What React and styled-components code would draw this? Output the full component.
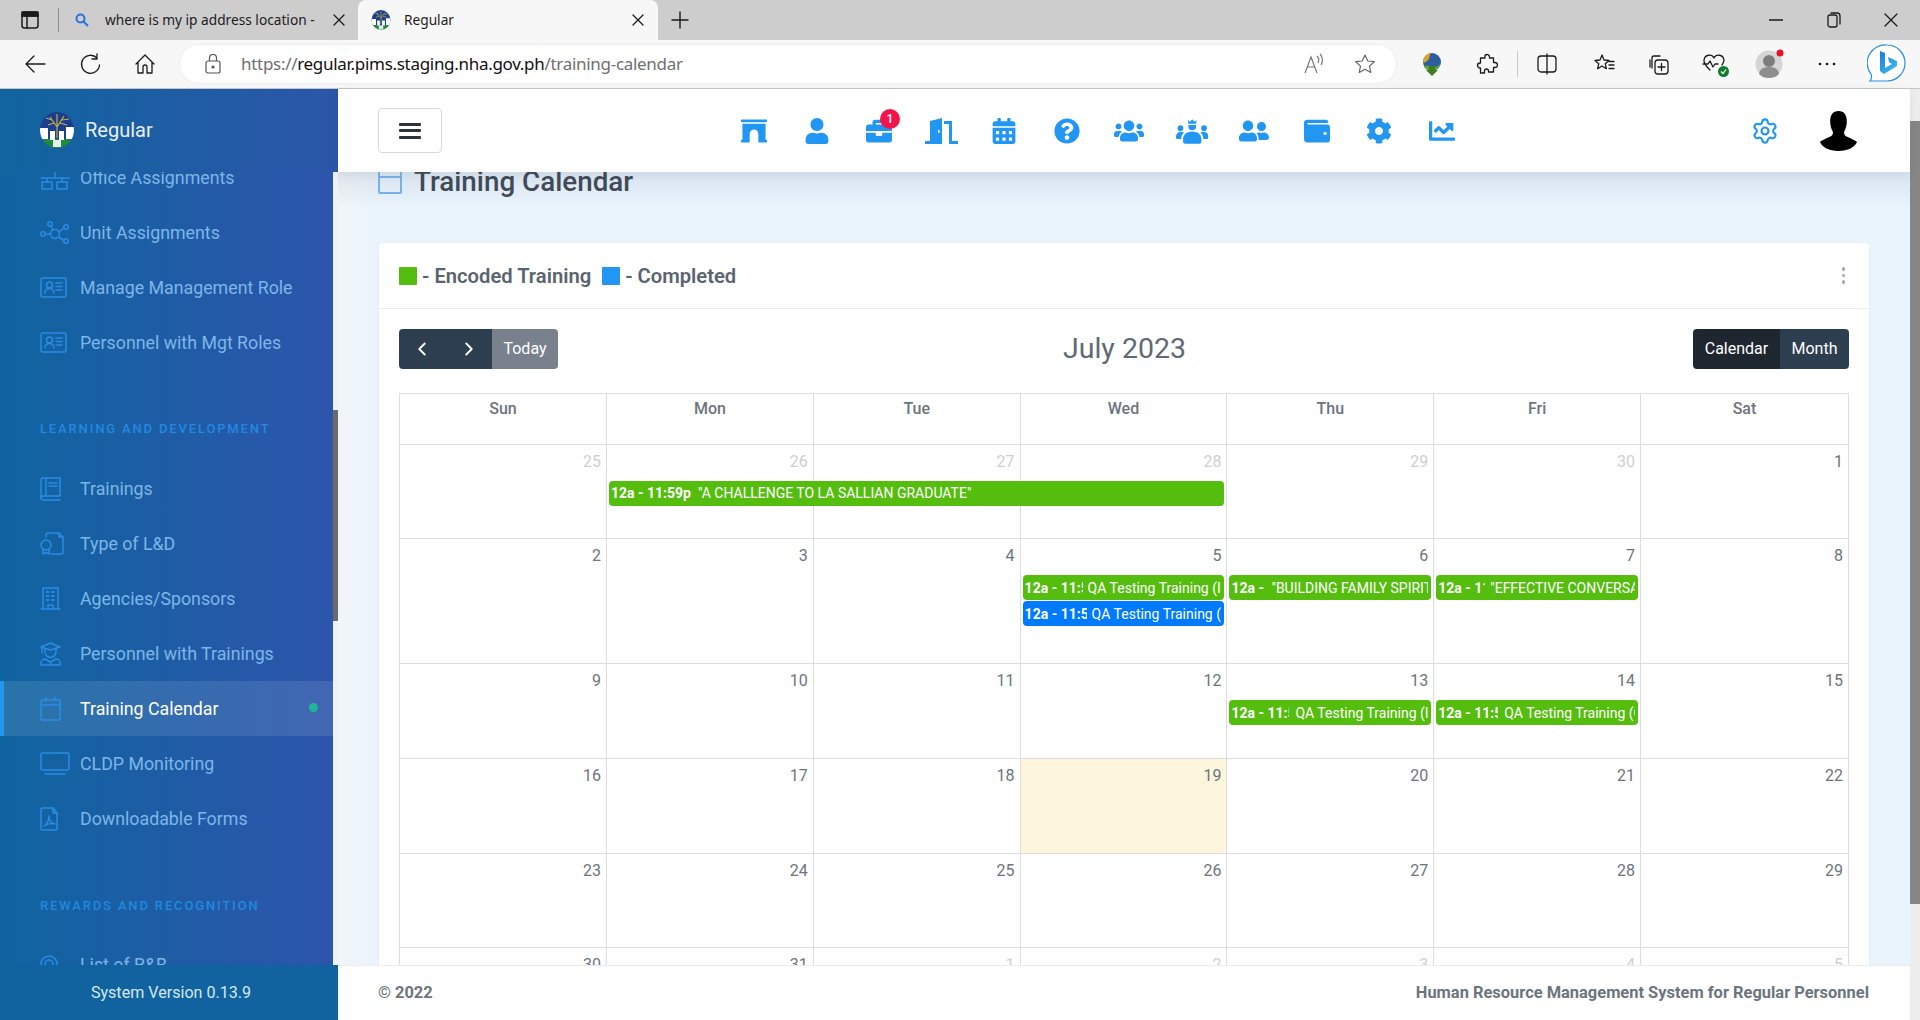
import React from "react";
import styled, { createGlobalStyle } from "styled-components";
import {
  FaArchway, FaUser, FaBriefcase, FaCalendarAlt, FaQuestionCircle,
  FaUsers, FaUserFriends, FaWallet, FaCog, FaChartLine,
} from "react-icons/fa";
import { Settings, ChevronLeft, ChevronRight } from "lucide-react";

const Global = createGlobalStyle`
  html, body { margin: 0; padding: 0; height: 1020px; overflow: hidden; background: #fff; }
  body { font-family: Roboto, "Liberation Sans", sans-serif; }
  * { box-sizing: border-box; }
`;

const Shell = styled.div`display:flex;flex-direction:column;width:1920px;height:1020px;overflow:hidden;`;

/* ---------- browser chrome ---------- */
const TabStrip = styled.div`display:flex;align-items:center;height:40px;background:#cdcdcd;`;
const TabsButton = styled.div`width:59px;height:24px;display:flex;align-items:center;justify-content:center;padding-left:1px;border-right:1px solid #8f8f8f;`;
const Tab = styled.div`
  display:flex;align-items:center;height:40px;font:13.7px "Noto Sans","Open Sans",sans-serif;color:#1c1c1c;padding-bottom:1px;
  width:${p => p.$w}px;padding-left:${p => p.$pl}px;
  background:${p => (p.$active ? "#f7f7f7" : "transparent")};
  border-radius:${p => (p.$active ? "8px 8px 0 0" : "0")};
`;
const TabTitle = styled.span`flex:1;white-space:nowrap;overflow:hidden;margin-left:${p => p.$ml}px;`;
const TabClose = styled.div`width:12px;height:12px;margin-right:${p => p.$mr}px;display:flex;`;
const NewTab = styled.div`margin-left:13px;display:flex;`;
const WindowControls = styled.div`margin-left:auto;display:flex;gap:43.5px;padding-right:22px;align-items:center;`;
const ToolBar = styled.div`display:flex;align-items:center;height:49px;background:#f7f7f7;border-bottom:1px solid #c6c6c6;padding-bottom:1px;`;
const ToolGroup = styled.div`display:flex;width:180px;flex-shrink:0;padding-left:24px;gap:33px;`;
const AddressBar = styled.div`
  width:1216px;flex-shrink:0;height:38px;border-radius:19px;background:#fff;display:flex;align-items:center;padding-left:25px;
  box-shadow:0 0 3px rgba(0,0,0,.08);
`;
const Url = styled.div`margin-left:20px;font:17px "Noto Sans","Open Sans",sans-serif;letter-spacing:-.3px;color:#6f6f6f;flex:1;white-space:nowrap;`;
const UrlHost = styled.span`color:#111;`;
const AddrIcons = styled.div`display:flex;gap:29px;padding-right:20px;align-items:center;`;
const ExtIcons = styled.div`display:flex;align-items:center;margin-left:23px;`;
const Ext = styled.div`width:${p => p.$w || 55}px;margin-left:${p => p.$ml || 0}px;display:flex;justify-content:center;align-items:center;position:relative;`;
const Sep = styled.div`width:1px;height:26px;background:#c9c9c9;`;
const HealthOk = styled.svg`position:absolute;left:32px;top:14px;`;

const line = { fill: "none", stroke: "#1b1b1b", strokeWidth: 1.3, strokeLinecap: "round", strokeLinejoin: "round" };
const Ico = ({ w = 22, h = 22, children, vb }) => (
  <svg width={w} height={h} viewBox={vb || `0 0 ${w} ${h}`} {...line}>{children}</svg>
);

const Logo = ({ size }) => (
  <svg width={size} height={size} viewBox="0 0 36 36">
    <defs><clipPath id={`lc${size}`}><ellipse cx="18" cy="18" rx="17" ry="18" /></clipPath></defs>
    <g clipPath={`url(#lc${size})`}>
      <rect width="36" height="27" fill="#1b3f8e" />
      <rect y="27" width="36" height="9" fill="#1f8a3c" />
      <path d="M18 26V12M18 15 11 5M18 15 25 4M18 12 18 2M13 8 7 6M23 8 30 7M15 11 9 13M21 11 28 13" stroke="#c9ad3f" strokeWidth="1.2" fill="none" />
      <path d="M1 16h8v11H1zM11 19h5v9h-5zM20 19h5v9h-5zM27 15h8v12h-8z" fill="#fff" />
      <path d="M14 28h8v7h-8z" fill="#e7f0e8" />
    </g>
  </svg>
);

/* ---------- sidebar ---------- */
const Page = styled.div`display:flex;flex:1;min-height:0;`;
const Sidebar = styled.aside`width:338px;display:flex;flex-direction:column;flex-shrink:0;`;
const Brand = styled.div`
  height:83px;display:flex;align-items:center;padding:0 0 1px 39px;gap:10px;color:#e6eff9;font-size:20px;
  background:linear-gradient(90deg,#10649f,#2c56a9);
`;
const NavWrap = styled.div`flex:1;display:flex;min-height:0;`;
const Nav = styled.nav`
  width:333px;overflow:hidden;background:linear-gradient(90deg,#0f64a0,#2d55ab);
`;
const NavList = styled.div`margin-top:-22px;`;
const NavScroll = styled.div`width:5px;background:#eef2f6;padding-top:238px;`;
const NavThumb = styled.div`height:211px;background:#6b6b6b;`;
const Item = styled.div`
  height:55px;display:flex;align-items:center;padding-left:${p => (p.$active ? 36 : 40)}px;font-size:17.8px;position:relative;
  color:${p => (p.$active ? "#fff" : "#7db6e8")};
  border-left:${p => (p.$active ? "4px solid #2196f3" : "none")};
  background:${p => (p.$active ? "rgba(255,255,255,.1)" : "transparent")};
`;
const ItemIcon = styled.div`width:40px;display:flex;`;
const Dot = styled.span`position:absolute;right:15px;top:22px;width:9px;height:9px;border-radius:50%;background:#20b69a;`;
const Section = styled.div`
  height:91px;padding:${p => p.$pt}px 0 0 40px;font-size:13px;font-weight:500;letter-spacing:1.85px;color:#2189e0;line-height:16px;
`;
const Version = styled.div`height:55px;background:#10639f;color:#d5e7f7;font-size:16.1px;display:flex;align-items:center;justify-content:center;padding-left:4px;`;

const sl = { fill: "none", stroke: "#2a8ce4", strokeWidth: 1.5, strokeLinejoin: "round", strokeLinecap: "round" };
const SIcon = ({ children }) => <svg width="30" height="24" viewBox="0 0 30 24" {...sl}>{children}</svg>;
const icons = {
  network: <SIcon><path d="M15 5v7M1 12h28M7 12v4M22 12v4" /><rect x="2" y="16" width="10" height="7" /><rect x="17" y="16" width="10" height="7" /></SIcon>,
  nodes: <SIcon><circle cx="15" cy="13" r="4.5" /><circle cx="10" cy="3" r="2.2" /><circle cx="26" cy="6" r="2.2" /><circle cx="26" cy="20" r="2.2" /><circle cx="3" cy="13" r="2.2" /><path d="M11 5l2 4M19 11l5-4M18.5 16l5.5 3.5M5.5 13h5" /></SIcon>,
  idcard: <SIcon><rect x="1" y="2" width="25" height="19" rx="2" /><circle cx="9.5" cy="9" r="3" /><path d="M5 17c0-6 9-6 9 0M16 7h6M16 10.5h6M16 14h6" /></SIcon>,
  book: <SIcon><path d="M1 20V3a2 2 0 0 1 2-2h17v18H3a2.5 2.5 0 0 0-2 2.500a2 2 0 0 0 2 1.500h17M6 1v18M9 6h8M9 9h8" /></SIcon>,
  cert: <SIcon><path d="M6 5V3a2 2 0 0 1 2-2h11l4 4v16a1 1 0 0 1-1 1H11M19 1v4h4" /><circle cx="6" cy="13" r="5" /><path d="M3 17v5l3-1.500 3 1.500v-5" /></SIcon>,
  building: <SIcon><path d="M1 22h19M3 22V1h15v21M8 22v-4h5v4" /><path d="M7 5h1.500M12 5h1.500M7 9h1.500M12 9h1.500M7 13h1.500M12 13h1.500" strokeWidth="2" /></SIcon>,
  grad: <SIcon><path d="M1 5l9.500-4L20 5l-9.500 3zM5 7v3a5.500 5.500 0 0 0 11 0V7M2 5v6" /><path d="M1 23v-2a4 4 0 0 1 4-4l5.500 3 5.500-3a4 4 0 0 1 4 4v2zM10.500 20v3" /></SIcon>,
  cal: <SIcon><rect x="1" y="3" width="19" height="20" rx="1.500" /><path d="M1 8h19M6 0v3M15 0v3" /></SIcon>,
  monitor: <SIcon><rect x="1" y="1" width="28" height="17" rx="1.500" /><path d="M5 22h20" /></SIcon>,
  pdf: <SIcon><path d="M1 3a2 2 0 0 1 2-2h10l4 5v16a1 1 0 0 1-1 1H2a1 1 0 0 1-1-1zM13 1v5h4" /><path d="M4 19c3-1 5-6 5-10 0 4 2 7 6 8-4-1-8 0-11 2z" /></SIcon>,
  target: <SIcon><circle cx="9" cy="11" r="8" /><circle cx="9" cy="11" r="4" /></SIcon>,
};

const NavData = [
  { t: "Office Assignments", i: "network" },
  { t: "Unit Assignments", i: "nodes" },
  { t: "Manage Management Role", i: "idcard" },
  { t: "Personnel with Mgt Roles", i: "idcard" },
  { s: "LEARNING AND DEVELOPMENT", pt: 51 },
  { t: "Trainings", i: "book" },
  { t: "Type of L&D", i: "cert" },
  { t: "Agencies/Sponsors", i: "building" },
  { t: "Personnel with Trainings", i: "grad" },
  { t: "Training Calendar", i: "cal", active: true },
  { t: "CLDP Monitoring", i: "monitor" },
  { t: "Downloadable Forms", i: "pdf" },
  { s: "REWARDS AND RECOGNITION", pt: 52 },
  { t: "List of R&B", i: "target" },
];

/* ---------- main ---------- */
const Main = styled.main`flex:1;min-width:0;display:flex;flex-direction:column;`;
const TopBar = styled.header`
  height:83px;background:#fff;display:flex;align-items:center;padding:0 53px 0 40px;position:relative;z-index:2;
  box-shadow:0 2px 10px rgba(40,60,90,.08);
`;
const Burger = styled.button`
  width:64px;height:45px;background:#fff;border:1px solid #d5d8dc;border-radius:4px;display:flex;flex-direction:column;
  align-items:center;justify-content:center;gap:3.500px;padding:0;
`;
const BurgerBar = styled.span`display:block;width:22px;height:3px;background:#2d353c;border-radius:1px;`;
const TopNav = styled.div`display:flex;margin-left:281px;align-items:center;`;
const NavCell = styled.div`
  width:62.5px;display:flex;justify-content:center;align-items:center;position:relative;color:#2196f3;
  svg { height:${p => p.$h || 26}px;width:auto;display:block; }
`;
const Badge = styled.span`
  position:absolute;left:32px;top:-9px;width:20px;height:20px;border-radius:50%;background:#f5134c;color:#fff;
  font-size:12px;font-weight:500;display:flex;align-items:center;justify-content:center;
`;
const TopRight = styled.div`margin-left:auto;display:flex;align-items:center;gap:41px;color:#2196f3;`;

const Content = styled.div`
  flex:1;min-height:0;overflow:hidden;padding:0 41px;
  background:linear-gradient(180deg,rgba(90,110,140,.12),rgba(90,110,140,0) 36px),linear-gradient(90deg,#f2f5f8 0,#eaf4fd 40px);
`;
const TitleRow = styled.div`height:71px;display:flex;`;
const TitleIcon = styled.div`
  width:24px;height:24px;margin:-2px 12px 0 -1px;border:2px solid #76b2e6;border-radius:2px;position:relative;
  &::before{content:"";position:absolute;left:0;right:0;top:4px;height:2px;background:#76b2e6;}
`;
const Title = styled.h1`margin:-3px 0 0;font-size:27.8px;font-weight:500;line-height:26px;color:#414b57;`;
const Card = styled.section`background:#fff;border-radius:4px;box-shadow:0 1px 3px rgba(60,80,110,.07);`;
const CardHead = styled.div`height:66px;border-bottom:1px solid #ececec;display:flex;align-items:center;padding:0 20px;color:#5a6470;font-size:20.2px;font-weight:600;`;
const Swatch = styled.span`width:18px;height:18px;background:${p => p.$c};margin-right:5px;margin-left:${p => p.$ml || 0}px;border-radius:1px;`;
const Kebab = styled.div`
  margin-left:auto;margin-right:4px;display:flex;flex-direction:column;gap:3px;
`;
const KebabDot = styled.span`width:3.500px;height:3.500px;border-radius:50%;background:#a2a9b2;`;
const CardBody = styled.div`padding:20px 20px 0;`;
const CalBar = styled.div`display:flex;align-items:flex-start;justify-content:space-between;height:64px;position:relative;`;
const BtnGroup = styled.div`display:flex;height:40px;border-radius:4px;overflow:hidden;`;
const Btn = styled.div`
  width:${p => p.$w}px;display:flex;align-items:center;justify-content:center;color:#fff;font-size:16px;padding-bottom:1px;
  background:${p => p.$bg};
`;
const Month = styled.h2`margin:0;font-size:28.5px;font-weight:400;color:#5f6a75;line-height:40px;position:relative;left:-1px;`;
const Table = styled.div`border:1px solid #ddd;border-bottom:none;width:1450px;`;
const COLS = "206px repeat(5,206.8px) 1fr";
const HeadRow = styled.div`display:grid;grid-template-columns:${COLS};height:50px;`;
const HeadCell = styled.div`
  text-align:center;font-size:16px;font-weight:500;color:#6c757d;padding-top:5px;line-height:19px;
  border-left:${p => (p.$first ? "none" : "1px solid #ddd")};
`;
const Week = styled.div`
  display:grid;grid-template-columns:${COLS};grid-template-rows:37px 26px 26px 1fr;height:${p => p.$h}px;
`;
const Cell = styled.div`
  grid-column:${p => p.$col};grid-row:1 / -1;border-top:1px solid #ddd;padding:7px 5px 0 0;text-align:right;font-size:16px;line-height:20px;
  border-left:${p => (p.$col === 1 ? "none" : "1px solid #ddd")};
  color:${p => (p.$muted ? "#cfcfcf" : "#6c757d")};
  background:${p => (p.$today ? "#fdf6dd" : "transparent")};
`;
const Event = styled.div`
  grid-column:${p => p.$col} / span ${p => p.$span || 1};grid-row:${p => p.$row};z-index:1;
  margin:0 2px 0 3px;height:25px;border-radius:4px;background:${p => p.$c};color:#fff;font-size:14px;line-height:${p => p.$lh || 26}px;
  padding:0 3px 0 2px;display:flex;overflow:hidden;white-space:nowrap;min-width:0;
`;
const EvTime = styled.b`font-weight:700;flex:none;overflow:hidden;width:${p => p.$w}px;margin-right:${p => p.$gap}px;`;
const EvTitle = styled.span`overflow:hidden;min-width:0;flex:1;`;
const Footer = styled.footer`
  height:55px;background:#fff;border-top:1px solid #ececec;display:flex;align-items:center;justify-content:space-between;
  padding:0 41px 2px 40px;color:#6c757d;font-size:16.45px;font-weight:700;
`;
const MainScroll = styled.div`width:10px;background:#ededed;padding-top:32px;flex-shrink:0;`;
const MainThumb = styled.div`height:783px;background:#868686;`;

const GREEN = "#55bd0e";
const weeks = [
  { h: 94, days: [25, 26, 27, 28, 29, 30, 1], muted: [0, 1, 2, 3, 4, 5],
    ev: [{ col: 2, span: 3, row: 2, c: GREEN, lh: 24, time: "12a - 11:59p", w: 81, gap: 6, title: "\"A CHALLENGE TO LA SALLIAN GRADUATE\"" }] },
  { h: 125, days: [2, 3, 4, 5, 6, 7, 8],
    ev: [
      { col: 4, row: 2, c: GREEN, time: "12a - 11:59p", w: 58, gap: 5, title: "QA Testing Training (Internal)" },
      { col: 4, row: 3, c: "#007bff", time: "12a - 11:59p", w: 62, gap: 5, title: "QA Testing Training (Completed)" },
      { col: 5, row: 2, c: GREEN, time: "12a - 11:59p", w: 34, gap: 6, title: "\"BUILDING FAMILY SPIRIT\"" },
      { col: 6, row: 2, c: GREEN, time: "12a - 11:59p", w: 47, gap: 5, title: "\"EFFECTIVE CONVERSATIONS\"" },
    ] },
  { h: 95, days: [9, 10, 11, 12, 13, 14, 15],
    ev: [
      { col: 5, row: 2, c: GREEN, time: "12a - 11:59p", w: 58, gap: 6, title: "QA Testing Training (Internal)" },
      { col: 6, row: 2, c: GREEN, time: "12a - 11:59p", w: 60, gap: 6, title: "QA Testing Training (Completed)" },
    ] },
  { h: 95, days: [16, 17, 18, 19, 20, 21, 22], today: 3 },
  { h: 94, days: [23, 24, 25, 26, 27, 28, 29] },
  { h: 94, days: [30, 31, 1, 2, 3, 4, 5], muted: [2, 3, 4, 5, 6] },
];

const CrownUsers = () => (
  <svg viewBox="0 0 640 512" fill="currentColor">
    <path d="M232 40l44 34 44-50 44 50 44-34-12 74H244z" />
    <path d="M246 138h148v30a74 74 0 0 1-148 0z" />
    <circle cx="88" cy="200" r="56" /><circle cx="552" cy="200" r="56" />
    <path d="M0 370c0-60 40-100 110-100 20 0 36 5 48 14-34 28-56 76-56 130H32c-18 0-32-14-32-32zM640 370c0-60-40-100-110-100-20 0-36 5-48 14 34 28 56 76 56 130h70c18 0 32-14 32-32z" />
    <path d="M140 420c0-80 60-152 180-152s180 72 180 152v50c0 22-18 38-40 38H180c-22 0-40-16-40-38z" />
  </svg>
);

const Door = () => (
  <svg viewBox="0 0 33 26" fill="currentColor">
    <path fillRule="evenodd" d="M5 3 17 0v26H0v-3h5zM13 12h1.500v3H13z" />
    <path d="M19 3h8v20h6v3h-9V6h-5z" />
  </svg>
);

const Avatar = () => (
  <svg width="37" height="40" viewBox="0 0 40 40" preserveAspectRatio="none" fill="#000">
    <path d="M20 0c6 0 9 4 9 10 0 4-1 8-3 11 0 3 1 4 4 5 5 2 9 4 10 5-2 5-10 9-20 9S2 36 0 31c1-1 5-3 10-5 3-1 4-2 4-5-2-3-3-7-3-11 0-6 3-10 9-10z" />
  </svg>
);

export default function App() {
  return (
    <Shell>
      <Global />
      <TabStrip>
        <TabsButton>
          <Ico w={18} h={18}><rect x="1" y="1" width="16" height="16" rx="2.500" strokeWidth="1.500" /><path d="M1 5h16M6 5v12" strokeWidth="1.500" /><rect x="1" y="1" width="16" height="4" fill="#1b1b1b" /></Ico>
        </TabsButton>
        <Tab $w={299} $pl={16}>
          <svg width="14" height="14" viewBox="0 0 14 14" fill="none" stroke="#2b6fe0" strokeWidth="2"><circle cx="5.500" cy="5.500" r="4" /><path d="M8.500 8.500 13 13" /></svg>
          <TabTitle $ml={16}>where is my ip address location -</TabTitle>
          <TabClose $mr={13}><Ico w={12} h={12}><path d="M1 1l10 10M11 1 1 11" /></Ico></TabClose>
        </Tab>
        <Tab $active $w={300} $pl={13}>
          <Logo size={20} />
          <TabTitle $ml={13}>Regular</TabTitle>
          <TabClose $mr={14}><Ico w={12} h={12}><path d="M1 1l10 10M11 1 1 11" /></Ico></TabClose>
        </Tab>
        <NewTab><Ico w={18} h={18}><path d="M9 1v16M1 9h16" strokeWidth="1.400" /></Ico></NewTab>
        <WindowControls>
          <Ico w={14} h={14}><path d="M0 7h14" /></Ico>
          <Ico w={14} h={16}><rect x="1" y="3" width="9" height="12" rx="2" /><path d="M4 1h6a3 3 0 0 1 3 3v8" /></Ico>
          <Ico w={14} h={14}><path d="M1 1l12 12M13 1 1 13" /></Ico>
        </WindowControls>
      </TabStrip>
      <ToolBar>
        <ToolGroup>
          <Ico><path d="M21 11H2M10 3l-8 8 8 8" /></Ico>
          <Ico><path d="M18 5a9 9 0 1 0 2.500 7M18 1v5h-5" /></Ico>
          <Ico><path d="M2 11l9-9 9 9M4 9v11h5v-6a2 2 0 0 1 4 0v6h5V9" /></Ico>
        </ToolGroup>
        <AddressBar>
          <svg width="16" height="20" viewBox="0 0 16 20" fill="none" stroke="#555" strokeWidth="1.200"><rect x="1" y="7" width="14" height="12" rx="2" /><path d="M4.500 7V4a3.500 3.500 0 0 1 7 0v3" /><circle cx="8" cy="13" r="1" fill="#555" /></svg>
          <Url>https://<UrlHost>regular.pims.staging.nha.gov.ph</UrlHost>/training-calendar</Url>
          <AddrIcons>
            <svg width="22" height="22" viewBox="0 0 22 22" fill="none" stroke="#777" strokeWidth="1.200"><path d="M2 20 8 4l6 16M4.500 14h7M14 3c2 2 2 5 1 7M17 1c3 3 3 8 1 11" /></svg>
            <svg width="22" height="22" viewBox="0 0 22 22" fill="none" stroke="#666" strokeWidth="1.200" strokeLinejoin="round"><path d="M11 2l2.800 6 6.500.7-4.800 4.400 1.300 6.400L11 16.300 5.200 19.500l1.300-6.400L1.700 8.700 8.200 8z" /></svg>
          </AddrIcons>
        </AddressBar>
        <ExtIcons>
          <Ext $w={26}>
            <svg width="22" height="24" viewBox="0 0 22 24"><circle cx="11" cy="10" r="9" fill="#2d5f9e" /><path d="M2 10a9 9 0 0 1 8-9c-2 3-1 5-3 7s-3 3-5 2z" fill="#d8a52a" /><path d="M3 15c3-3 6-1 8 0s5 0 8-3c-1 4-4 7-8 7s-6-2-8-4z" fill="#57a832" /><path d="M8 14h6v4h3l-6 6-6-6h3z" fill="#3f7d1f" /></svg>
          </Ext>
          <Ext $w={60} $ml={12}>
            <Ico><path d="M9 2.500a2.500 2.500 0 0 1 4.500 1.500V5h4v4.500H19a2.500 2.500 0 0 1 0 5h-1.500V19h-5v-1a2 2 0 0 0-4 0v2H4.500v-5H4a2.500 2.500 0 0 1 0-5h.5V5H9z" /></Ico>
          </Ext>
          <Sep />
          <Ext $w={58}><Ico><rect x="2" y="3" width="18" height="16" rx="3" /><path d="M11 1v20" /></Ico></Ext>
          <Ext><Ico><path d="M9 2l2 5 5 .5-3.800 3.200 1.200 5L9 13l-4.400 2.700 1.200-5L2 7.500 7 7zM16 12h5M16 15.500h5M16 8.500h5" /></Ico></Ext>
          <Ext><Ico><path d="M4 15V5a2 2 0 0 1 2-2h6M2 14V7" /><rect x="7" y="7" width="13" height="14" rx="3" /><path d="M13.500 10.500v7M10 14h7" /></Ico></Ext>
          <Ext>
            <Ico w={24} h={24}><path d="M12 6c-2-4-9-4-10 2-.5 4 3 7 6 10M12 6c2-4 9-4 10 2 0 2-1 3-2 5M1 12h5l2-3 3 6 2-3h3" /></Ico>
            <HealthOk width="11" height="11" viewBox="0 0 11 11"><circle cx="5.500" cy="5.500" r="5.500" fill="#0f7b2e" /><path d="M3 5.500l2 2 3-4" stroke="#fff" fill="none" strokeWidth="1.200" /></HealthOk>
          </Ext>
          <Ext $w={58}>
            <svg width="30" height="30" viewBox="0 0 30 30"><circle cx="14" cy="15" r="13.500" fill="#d5d5d5" /><circle cx="14" cy="12" r="6" fill="#7d7d7d" /><path d="M4 25c1-6 5-7 10-7s9 1 10 7c-3 3-6 4-10 4s-7-1-10-4z" fill="#8e8e8e" /><circle cx="25" cy="4" r="3.500" fill="#e81123" /></svg>
          </Ext>
          <Ext $w={56}><Ico w={20} h={6} ><path d="M3 3h.1M10 3h.1M17 3h.1" strokeWidth="2.600" /></Ico></Ext>
          <Ext $w={64}>
            <svg width="40" height="40" viewBox="0 0 40 40">
              <defs><linearGradient id="bg1" x1="0" y1="0" x2="1" y2="1"><stop offset="0" stopColor="#1c7ae8" /><stop offset="1" stopColor="#3fc4e6" /></linearGradient></defs>
              <path d="M20 1a18 18 0 0 1 0 36H3c2-2 2-4 1-7A18 18 0 0 1 20 1z" fill="#fff" stroke="#2a8de6" strokeWidth="1.200" />
              <path d="M13 7l5 2v15l7-4-3-2-1-5 9 4v5l-13 8-4-3z" fill="url(#bg1)" />
            </svg>
          </Ext>
        </ExtIcons>
      </ToolBar>

      <Page>
        <Sidebar>
          <Brand><Logo size={36} />Regular</Brand>
          <NavWrap>
            <Nav>
              <NavList>
                {NavData.map(n => n.s ? (
                  <Section key={n.s} $pt={n.pt}>{n.s}</Section>
                ) : (
                  <Item key={n.t} $active={n.active}>
                    <ItemIcon>{icons[n.i]}</ItemIcon>
                    {n.t}
                    {n.active && <Dot />}
                  </Item>
                ))}
              </NavList>
            </Nav>
            <NavScroll><NavThumb /></NavScroll>
          </NavWrap>
          <Version>System Version 0.13.9</Version>
        </Sidebar>

        <Main>
          <TopBar>
            <Burger><BurgerBar /><BurgerBar /><BurgerBar /></Burger>
            <TopNav>
              <NavCell><FaArchway /></NavCell>
              <NavCell><FaUser /></NavCell>
              <NavCell><FaBriefcase /><Badge>1</Badge></NavCell>
              <NavCell><Door /></NavCell>
              <NavCell><FaCalendarAlt /></NavCell>
              <NavCell><FaQuestionCircle /></NavCell>
              <NavCell $h={30}><FaUsers /></NavCell>
              <NavCell><CrownUsers /></NavCell>
              <NavCell $h={30}><FaUserFriends /></NavCell>
              <NavCell><FaWallet /></NavCell>
              <NavCell><FaCog /></NavCell>
              <NavCell><FaChartLine /></NavCell>
            </TopNav>
            <TopRight>
              <Settings size={28} strokeWidth={1.800} />
              <Avatar />
            </TopRight>
          </TopBar>

          <Content>
            <TitleRow><TitleIcon /><Title>Training Calendar</Title></TitleRow>
            <Card>
              <CardHead>
                <Swatch $c="#55bd0e" />- Encoded Training
                <Swatch $c="#2196f3" $ml={11} />- Completed
                <Kebab><KebabDot /><KebabDot /><KebabDot /></Kebab>
              </CardHead>
              <CardBody>
                <CalBar>
                  <BtnGroup>
                    <Btn $w={46} $bg="#2c3e50"><ChevronLeft size={22} /></Btn>
                    <Btn $w={47} $bg="#2c3e50"><ChevronRight size={22} /></Btn>
                    <Btn $w={66} $bg="#78818c">Today</Btn>
                  </BtnGroup>
                  <Month>July 2023</Month>
                  <BtnGroup>
                    <Btn $w={87} $bg="#1e2730">Calendar</Btn>
                    <Btn $w={69} $bg="#2c3e50">Month</Btn>
                  </BtnGroup>
                </CalBar>
                <Table>
                  <HeadRow>
                    {["Sun", "Mon", "Tue", "Wed", "Thu", "Fri", "Sat"].map((d, i) => (
                      <HeadCell key={d} $first={i === 0}>{d}</HeadCell>
                    ))}
                  </HeadRow>
                  {weeks.map((w, wi) => (
                    <Week key={wi} $h={w.h}>
                      {w.days.map((d, i) => (
                        <Cell key={i} $col={i + 1} $muted={w.muted && w.muted.includes(i)} $today={w.today === i}>{d}</Cell>
                      ))}
                      {(w.ev || []).map((e, i) => (
                        <Event key={i} $col={e.col} $span={e.span} $row={e.row} $c={e.c} $lh={e.lh}>
                          <EvTime $w={e.w} $gap={e.gap}>{e.time}</EvTime>
                          <EvTitle>{e.title}</EvTitle>
                        </Event>
                      ))}
                    </Week>
                  ))}
                </Table>
              </CardBody>
            </Card>
          </Content>

          <Footer>
            <span>© 2022</span>
            <span>Human Resource Management System for Regular Personnel</span>
          </Footer>
        </Main>
        <MainScroll><MainThumb /></MainScroll>
      </Page>
    </Shell>
  );
}
